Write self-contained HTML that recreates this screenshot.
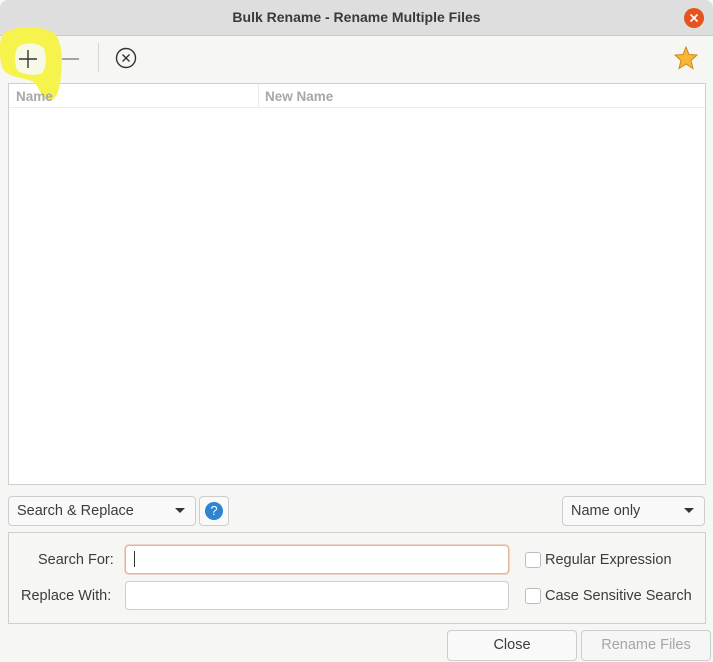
<!DOCTYPE html>
<html><head><meta charset="utf-8"><style>
*{box-sizing:border-box;margin:0;padding:0}
body{width:713px;height:662px;background:#f6f6f5;font-family:"Liberation Sans",sans-serif;font-size:14.5px;color:#3c3c3c;position:relative;overflow:hidden}
.abs{position:absolute}
.title{left:0;top:0;width:713px;height:36px;background:#dedede;border-bottom:1px solid #c8c8c8;border-radius:8px 8px 0 0}
.title span{position:absolute;left:0;right:0;top:9px;text-align:center;font-weight:bold;font-size:14px;color:#3a3a3a}
.btn{background:#f9f9f9;border:1px solid #cdcdcd;border-radius:4px}
.input{background:#fff;border:1px solid #cdcdcd;border-radius:4px}
.cb{width:16px;height:16px;border:1px solid #bdbdbd;border-radius:3px;background:#fff}
</style></head><body>
<div class="abs title"><span>Bulk Rename - Rename Multiple Files</span>
<div class="abs" style="left:684px;top:8px;width:20px;height:20px;border-radius:50%;background:#e5531f"><svg width="20" height="20"><path d="M6.5 6.5L13.5 13.5M13.5 6.5L6.5 13.5" stroke="#fff" stroke-width="1.6"/></svg></div></div>
<!-- list -->
<div class="abs" style="left:8px;top:83px;width:698px;height:402px;background:#fff;border:1px solid #cfcfcf"></div>
<div class="abs" style="left:9px;top:84px;width:696px;height:24px;border-bottom:1px solid #ececec"></div>
<div class="abs" style="left:258px;top:84px;width:1px;height:24px;background:#ececec"></div>
<div class="abs" style="left:265px;top:89px;font-weight:bold;color:#a8a8a8;font-size:13.5px">New Name</div>
<!-- yellow highlight -->
<svg class="abs" style="left:0;top:25px" width="70" height="80"><path fill-rule="evenodd" fill="#f5f34c" d="M2 10 C12 0 45 -1 56 10 C64 22 62 45 60 58 C58 70 55 76 48 75 C40 74 40 60 32 56 C20 52 6 52 2 42 C-1 32 -1 18 2 10Z M18 22 C24 17 40 17 44 24 C47 32 46 44 42 48 C36 51 24 50 18 46 C14 40 14 28 18 22Z"/><path fill="#f8f8e6" d="M18 22 C24 17 40 17 44 24 C47 32 46 44 42 48 C36 51 24 50 18 46 C14 40 14 28 18 22Z"/></svg>
<div class="abs" style="left:16px;top:89px;font-weight:bold;color:#a8a8a8;font-size:13.5px">Name</div>
<svg class="abs" style="left:16px;top:47px" width="24" height="24"><path d="M12 3V21M3 12H21" stroke="#333" stroke-width="1.4"/></svg>
<svg class="abs" style="left:59px;top:47px" width="24" height="24"><path d="M3 12H20" stroke="#888" stroke-width="1.4"/></svg>
<div class="abs" style="left:98px;top:43px;width:1px;height:29px;background:#d6d6d6"></div>
<svg class="abs" style="left:114px;top:46px" width="24" height="24"><circle cx="12" cy="12" r="9.5" fill="none" stroke="#333" stroke-width="1.4"/><path d="M8.5 8.5L15.5 15.5M15.5 8.5L8.5 15.5" stroke="#333" stroke-width="1.4"/></svg>
<svg class="abs" style="left:673px;top:45px" width="26" height="26"><path d="M13 2L16 9.5L24 10L18 15.5L20 23.5L13 19L6 23.5L8 15.5L2 10L10 9.5Z" fill="#f7b634" stroke="#c98a1c" stroke-width="1"/></svg>
<!-- combos -->
<div class="abs btn" style="left:8px;top:496px;width:188px;height:30px"></div>
<div class="abs" style="left:17px;top:503px">Search &amp; Replace</div>
<svg class="abs" style="left:175px;top:507px" width="10" height="8"><path d="M0 1H10L5 6Z" fill="#333"/></svg>
<div class="abs btn" style="left:199px;top:496px;width:30px;height:30px"></div>
<div class="abs" style="left:205px;top:502px;width:18px;height:18px;border-radius:50%;background:#2d84d0;color:#fff;font-size:13px;text-align:center;line-height:18px">?</div>
<div class="abs btn" style="left:562px;top:496px;width:143px;height:30px"></div>
<div class="abs" style="left:571px;top:503px">Name only</div>
<svg class="abs" style="left:684px;top:507px" width="10" height="8"><path d="M0 1H10L5 6Z" fill="#333"/></svg>
<!-- frame -->
<div class="abs" style="left:8px;top:532px;width:698px;height:92px;border:1px solid #cfcfcf"></div>
<div class="abs" style="left:38px;top:552px">Search For:</div>
<div class="abs" style="left:21px;top:588px">Replace With:</div>
<div class="abs input" style="left:125px;top:545px;width:384px;height:29px;border-color:#e6b39b;box-shadow:0 0 0 1px #f0d3c5"></div>
<div class="abs" style="left:134px;top:551px;width:1px;height:16px;background:#333"></div>
<div class="abs input" style="left:125px;top:581px;width:384px;height:29px"></div>
<div class="abs cb" style="left:525px;top:552px"></div>
<div class="abs" style="left:545px;top:552px">Regular Expression</div>
<div class="abs cb" style="left:525px;top:588px"></div>
<div class="abs" style="left:545px;top:588px">Case Sensitive Search</div>
<!-- buttons -->
<div class="abs btn" style="left:447px;top:630px;width:130px;height:31px"></div>
<div class="abs" style="left:447px;top:637px;width:130px;text-align:center">Close</div>
<div class="abs btn" style="left:581px;top:630px;width:130px;height:31px;background:#f6f6f6"></div>
<div class="abs" style="left:581px;top:637px;width:130px;text-align:center;color:#a5a5a5">Rename Files</div>
</body></html>
